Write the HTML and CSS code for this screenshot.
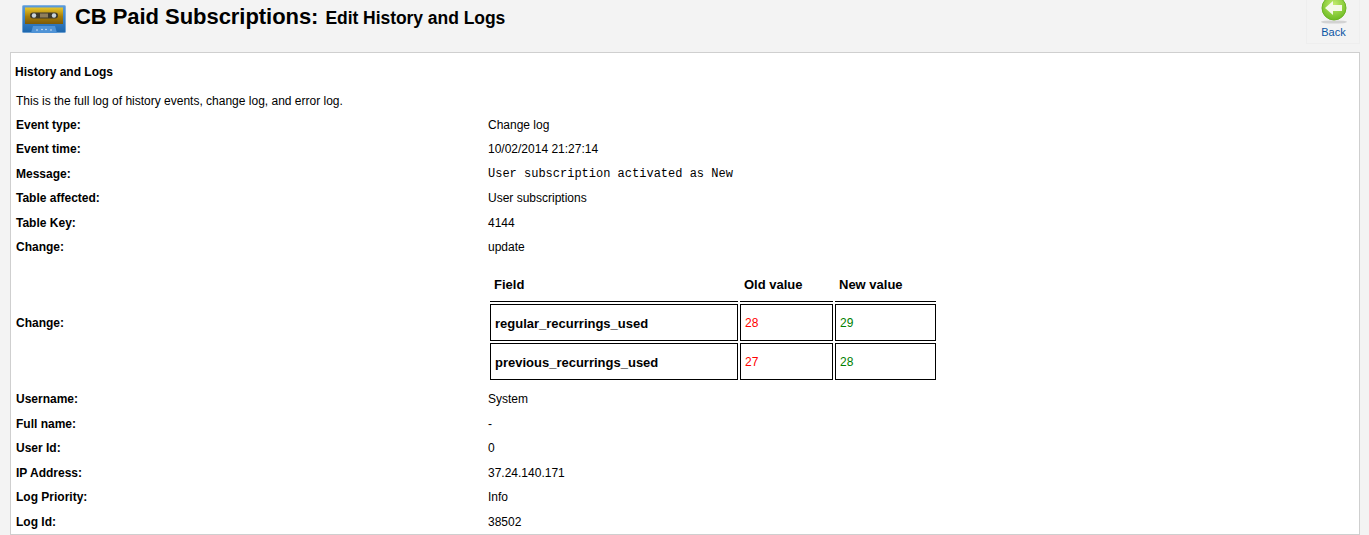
FILE: index.html
```html
<!DOCTYPE html>
<html lang="en">
<head>
<meta charset="utf-8">
<title>CB Paid Subscriptions: Edit History and Logs</title>
<link rel="stylesheet" href="styles.css">
</head>
<body>
<header class="toolbar">
  <svg class="logo" width="44" height="28" viewBox="0 0 44 28" aria-hidden="true">
    <defs>
      <linearGradient id="shell" x1="0" y1="0" x2="0" y2="1"><stop offset="0" stop-color="#5b9bdc"/><stop offset="1" stop-color="#1c66ad"/></linearGradient>
      <linearGradient id="label" x1="0" y1="0" x2="0" y2="1"><stop offset="0" stop-color="#e8c62a"/><stop offset=".55" stop-color="#a67c08"/><stop offset="1" stop-color="#7d5a06"/></linearGradient>
    </defs>
    <rect x=".3" y=".3" width="43.4" height="27.4" rx="1.5" fill="url(#shell)" stroke="#7fb0e0" stroke-width=".6"/>
    <rect x="3" y="2.5" width="38" height="16.5" fill="url(#label)"/>
    <rect x="8" y="7.5" width="28" height="6" rx="3" fill="#3c3a2c"/>
    <circle cx="12" cy="10.5" r="2.2" fill="#c9d4dc"/>
    <circle cx="32" cy="10.5" r="2.2" fill="#c9d4dc"/>
    <rect x="18" y="8.5" width="8" height="4" fill="#8f7f5c"/>
    <path d="M9 28l2-7h22l2 7z" fill="#4f93d6"/>
    <g fill="#dbe8f5"><circle cx="15" cy="25" r=".8"/><circle cx="20" cy="24.5" r=".8"/><circle cx="24" cy="24.5" r=".8"/><circle cx="29" cy="25" r=".8"/></g>
  </svg>
  <h1 class="title">CB Paid Subscriptions: <small class="subtitle">Edit History and Logs</small></h1>
  <a class="back" href="#">
    <svg class="back-icon" width="32" height="26" viewBox="0 0 32 26" aria-hidden="true">
      <defs>
        <radialGradient id="glow" cx=".5" cy=".35" r=".7"><stop offset="0" stop-color="#c3ec6e"/><stop offset="1" stop-color="#67b81d"/></radialGradient>
      </defs>
      <ellipse cx="16" cy="22" rx="13" ry="1.6" fill="#d2d2d2"/>
      <circle cx="16" cy="8" r="12" fill="url(#glow)" stroke="#6cb424" stroke-width="1"/>
      <path d="M7 8l8-7v4h9v6h-9v4z" fill="#f4f9e8"/>
    </svg>
    <span>Back</span>
  </a>
</header>
<main class="panel">
  <h2 class="panel-title">History and Logs</h2>
  <p class="intro">This is the full log of history events, change log, and error log.</p>
  <dl class="fields">
    <dt>Event type:</dt><dd>Change log</dd>
    <dt>Event time:</dt><dd>10/02/2014 21:27:14</dd>
    <dt>Message:</dt><dd class="mono">User subscription activated as New</dd>
    <dt>Table affected:</dt><dd>User subscriptions</dd>
    <dt>Table Key:</dt><dd>4144</dd>
    <dt>Change:</dt><dd>update</dd>
    <dt>Change:</dt>
    <dd class="changes-cell">
      <table class="changes">
        <thead>
          <tr><th class="col-field">Field</th><th class="col-old">Old value</th><th class="col-new">New value</th></tr>
        </thead>
        <tbody>
          <tr><th>regular_recurrings_used</th><td class="old">28</td><td class="new">29</td></tr>
          <tr><th>previous_recurrings_used</th><td class="old">27</td><td class="new">28</td></tr>
        </tbody>
      </table>
    </dd>
    <dt>Username:</dt><dd>System</dd>
    <dt>Full name:</dt><dd>-</dd>
    <dt>User Id:</dt><dd>0</dd>
    <dt>IP Address:</dt><dd>37.24.140.171</dd>
    <dt>Log Priority:</dt><dd>Info</dd>
    <dt>Log Id:</dt><dd>38502</dd>
  </dl>
</main>
</body>
</html>
```
FILE: styles.css
```css
html, body { margin: 0; height: 535px; overflow: hidden; }
body {
  background: #f3f3f3;
  color: #000;
  font: 12px/14px "Liberation Sans", Arial, sans-serif;
}
.toolbar {
  height: 52px;
  padding: 0 9px 0 22px;
  box-sizing: border-box;
  display: flex;
  align-items: flex-start;
}
.logo { margin-top: 5px; flex: none; }
.title {
  margin: 3px 0 0 9px;
  font-size: 22px;
  line-height: 28px;
  font-weight: bold;
  white-space: nowrap;
  letter-spacing: -.05px;
}
.subtitle { font-size: 17.5px; margin-left: 1px; }
.back {
  margin-left: auto;
  width: 54px;
  height: 44px;
  box-sizing: border-box;
  padding-left: 1px;
  border: 1px solid #eeeeee;
  border-top: 0;
  color: #0b55a4;
  text-decoration: none;
  font-size: 11px;
  line-height: 13px;
  text-align: center;
  display: flex;
  flex-direction: column;
  align-items: center;
}
.back-icon { display: block; }
.panel {
  margin: 0 9px 0 10px;
  height: 483px;
  box-sizing: border-box;
  background: #fff;
  border: 1px solid #cfcfcf;
  padding: 0 0 0 4px;
  overflow: hidden;
}
.panel-title { margin: 12px 0 0; font-size: 12px; line-height: 14px; font-weight: bold; }
.intro { margin: 15px 0 0 1px; }
.fields {
  margin: 4.5px 0 0 1px;
  display: grid;
  grid-template-columns: 472px 1fr;
  grid-auto-rows: minmax(24.5px, auto);
  align-items: center;
}
.fields dt { font-weight: bold; }
.fields dd { margin: 0; }
.mono { font-family: "Liberation Mono", "Courier New", monospace; }
.fields .changes-cell { padding: 4px 0 5.3px; }
.changes { border-collapse: separate; border-spacing: 2px; font-size: 13px; line-height: 15px; }
.changes thead th {
  height: 33px;
  padding: 2px 4px 0;
  border-bottom: 1px solid #000;
  text-align: left;
  font-weight: bold;
}
.changes tbody th, .changes tbody td {
  height: 33px;
  padding: 2px 4px 0;
  border: 1px solid #000;
  text-align: left;
}
.changes tbody td { font-size: 12px; font-weight: normal; }
.col-field { width: 240px; }
.col-old { width: 85px; }
.col-new { width: 93px; }
.old { color: #f00; }
.new { color: #008000; }
```
